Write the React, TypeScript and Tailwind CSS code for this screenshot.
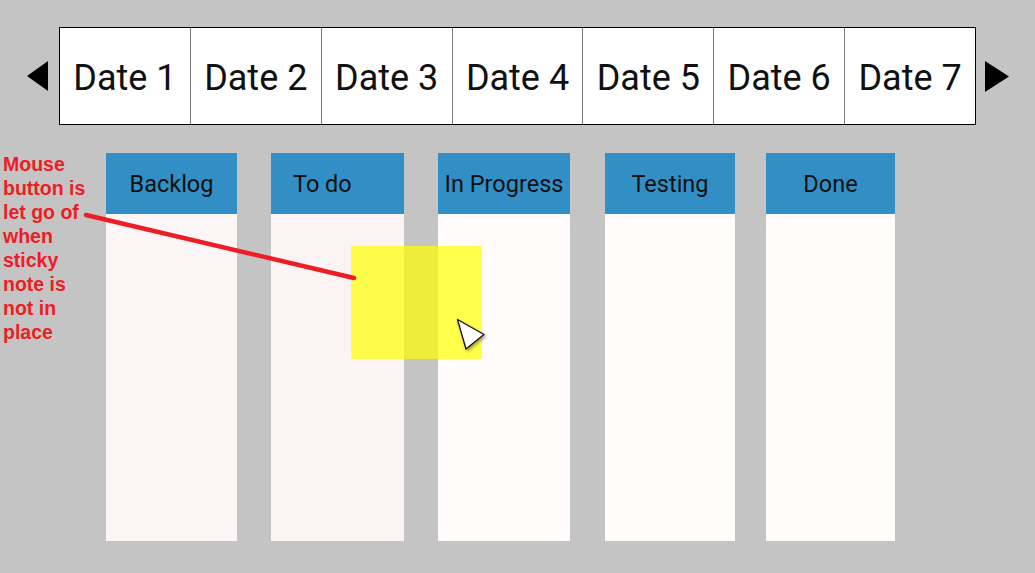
const dates = ['Date 1', 'Date 2', 'Date 3', 'Date 4', 'Date 5', 'Date 6', 'Date 7'];

const columns = [
  { title: 'Backlog', width: 'w-[131px]', body: 'bg-[#fcf6f6]', gap: 'ml-0', align: 'justify-center' },
  { title: 'To do', width: 'w-[133px]', body: 'bg-[#fcf3f4]', gap: 'ml-[34px]', align: 'justify-start pl-[22px]' },
  { title: 'In Progress', width: 'w-[132px]', body: 'bg-[#fffcfb]', gap: 'ml-[34px]', align: 'justify-center' },
  { title: 'Testing', width: 'w-[130px]', body: 'bg-[#fffcfb]', gap: 'ml-[35px]', align: 'justify-center' },
  { title: 'Done', width: 'w-[129px]', body: 'bg-[#fffcfb]', gap: 'ml-[31px]', align: 'justify-center' },
];

const note = ['Mouse', 'button is', 'let go of', 'when', 'sticky', 'note is', 'not in', 'place'];

const App = () => {
  return (
    <div className="relative w-[1035px] h-[573px] overflow-hidden bg-[#c4c4c4] font-['Roboto',sans-serif]">
      {/* Date strip */}
      <div className="flex items-center pt-[27px]">
        <svg className="ml-[27px] w-[21px] h-[30px]" viewBox="0 0 21 30">
          <polygon points="21,0 21,30 0,15" fill="#000" />
        </svg>
        <div className="ml-[11px] flex w-[917px] h-[98px] border border-black bg-white">
          {dates.map((d, i) => (
            <div
              key={d}
              className={`flex-1 flex items-center justify-center pt-[3px] text-[36px] text-[#111] ${i > 0 ? 'border-l border-[#7a7a7a]' : ''}`}
            >
              {d}
            </div>
          ))}
        </div>
        <svg className="ml-[9px] w-[24px] h-[31px]" viewBox="0 0 24 31">
          <polygon points="0,0 24,15.5 0,31" fill="#000" />
        </svg>
      </div>

      {/* Board */}
      <div className="flex pt-[28px]">
        <div className="w-[106px] -mt-px pl-[3px] font-['Liberation_Sans',Arial,sans-serif] font-bold text-[19.5px] leading-[24px] text-[#ee1c25]">
          {note.map((l) => (
            <div key={l}>{l}</div>
          ))}
        </div>
        {columns.map((c) => (
          <div key={c.title} className={`${c.width} ${c.gap} flex flex-col`}>
            <div className={`h-[61px] bg-[#318fc6] flex items-center pt-[2px] ${c.align} text-[23.5px] text-[#111] whitespace-nowrap`}>
              {c.title}
            </div>
            <div className={`h-[327px] ${c.body}`}></div>
          </div>
        ))}
      </div>

      {/* Dragged sticky note */}
      <div className="absolute left-[351px] top-[246px] w-[131px] h-[113px] bg-[#ffff00]/70"></div>

      {/* Annotation line */}
      <svg className="absolute left-0 top-0 w-[1035px] h-[573px] pointer-events-none" viewBox="0 0 1035 573">
        <line x1="86" y1="215" x2="354" y2="278" stroke="#ee1c25" strokeWidth="4.5" strokeLinecap="round" />
      </svg>

      {/* Mouse cursor */}
      <svg className="absolute left-[452px] top-[314px] w-[40px] h-[42px]" viewBox="0 0 40 42">
        <defs>
          <filter id="cs" x="-30%" y="-30%" width="160%" height="160%">
            <feDropShadow dx="1.5" dy="2" stdDeviation="1.5" floodColor="#000" floodOpacity="0.35" />
          </filter>
        </defs>
        <polygon points="5.5,5.5 32,20.5 14,35" fill="#fff" stroke="#111" strokeWidth="1.3" strokeLinejoin="round" filter="url(#cs)" />
      </svg>
    </div>
  );
};

export default App;
